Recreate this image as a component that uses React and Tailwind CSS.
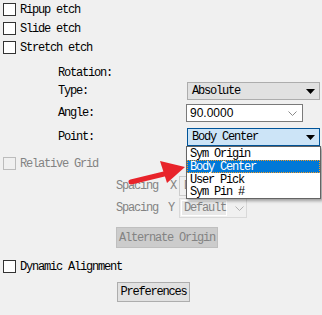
import React from 'react';

const mono = "font-[family-name:'Liberation_Mono',monospace] text-[12px] tracking-[-1.2px] leading-none";

const Check = ({ label, disabled }) => (
  <div className="h-[19px] flex items-center pl-[3px]">
    <div className={`w-[13px] h-[13px] border ${disabled ? 'border-[#bcbcbc] bg-[#f0f0f0]' : 'border-[#333333] bg-white'}`}></div>
    <span className={`ml-[4px] ${disabled ? 'text-[#838383]' : 'text-black'}`}>{label}</span>
  </div>
);

const Caret = () => (
  <svg width="9" height="5" viewBox="0 0 9 5" className="shrink-0">
    <path d="M0 0 L9 0 L4.5 5 Z" fill="#000" />
  </svg>
);

const Chevron = ({ color = '#8a8a8a' }) => (
  <svg width="9" height="5" viewBox="0 0 9 5" className="shrink-0">
    <path d="M0.5 0.5 L4.5 4.5 L8.5 0.5" fill="none" stroke={color} strokeWidth="1" />
  </svg>
);

export default function App() {
  return (
    <div className={`relative w-[322px] h-[315px] bg-[#f0f0f0] overflow-hidden ${mono}`}>
      {/* etch options */}
      <Check label="Ripup etch" />
      <Check label="Slide etch" />
      <Check label="Stretch etch" />

      {/* rotation block */}
      <div className="pl-[58px] pr-[2px] mt-[6px]">
        <div className="h-[19px] flex items-center">Rotation:</div>
        <div className="h-[18px] flex items-center">
          <span className="w-[129px]">Type:</span>
          <div className="flex-1 h-[18px] bg-[#e1e1e1] border border-[#adadad] flex items-center pl-[4px] pr-[4px]">
            <span className="flex-1">Absolute</span>
            <Caret />
          </div>
        </div>
        <div className="h-[18px] mt-[4px] flex items-center">
          <span className="w-[128px]">Angle:</span>
          <div className="w-[117px] h-[18px] bg-white border border-[#7a7a7a] flex items-center pl-[3px] pr-[5px]">
            <span className="flex-1 font-[family-name:'Liberation_Sans',sans-serif] text-[12px] tracking-normal">90.0000</span>
            <Chevron />
          </div>
        </div>
        <div className="h-[18px] mt-[6px] flex items-center">
          <span className="w-[129px]">Point:</span>
          <div className="flex-1 h-[18px] bg-[#cce4f7] border border-[#005499] flex items-center pl-[4px] pr-[4px]">
            <span className="flex-1">Body Center</span>
            <Caret />
          </div>
        </div>
      </div>

      {/* grid block */}
      <div className="mt-[8px]">
        <Check label="Relative Grid" disabled />
        <div className="pl-[116px] text-[#838383]">
          <div className="h-[20px] mt-[3px] flex items-center">
            <span className="w-[54px]">Spacing</span>
            <span className="w-[9px]">X</span>
            <div className="w-[68px] h-[20px] border border-[#cccccc] bg-[#f0f0f0] flex items-center pl-[4px]">D</div>
          </div>
          <div className="h-[20px] mt-[2px] flex items-center">
            <span className="w-[52px]">Spacing</span>
            <span className="w-[11px]">Y</span>
            <div className="w-[68px] h-[20px] border border-[#d9d9d9] bg-[#f0f0f0] flex items-center pl-[1px] pr-[4px]">
              <span className="flex-1 bg-[#e8e8e8] pl-[2px] h-[16px] flex items-center mr-[8px] border border-white">Default</span>
              <Chevron color="#b0b0b0" />
            </div>
          </div>
          <div className="mt-[9px] w-[102px] h-[21px] bg-[#cccccc] border border-[#bfbfbf] flex items-center justify-center">
            Alternate Origin
          </div>
        </div>
      </div>

      <div className="mt-[9px]">
        <Check label="Dynamic Alignment" />
      </div>
      <div className="pl-[117px] mt-[6px]">
        <div className="w-[73px] h-[20px] bg-[#e1e1e1] border border-[#adadad] flex items-center justify-center">
          Preferences
        </div>
      </div>

      {/* open dropdown list */}
      <div className="absolute left-[186px] top-[146px] w-[135px] bg-white border border-[#646464] shadow-[2px_2px_3px_rgba(0,0,0,0.35)]">
        <div className="h-[13px] flex items-center pl-[3px]">Sym Origin</div>
        <div className="h-[13px] flex items-center pl-[2px] bg-[#0078d7] text-white border border-dotted border-[#f59a23]">Body Center</div>
        <div className="h-[13px] flex items-center pl-[3px]">User Pick</div>
        <div className="h-[12px] flex items-center pl-[3px]">Sym Pin #</div>
      </div>

      {/* annotation arrow */}
      <svg className="absolute left-0 top-0 pointer-events-none" width="322" height="315">
        <path d="M131 182 L164 174" stroke="#e8232a" strokeWidth="5" strokeLinecap="round" fill="none" />
        <path d="M185 167 L160 161 L167 183 Z" fill="#e8232a" />
      </svg>
    </div>
  );
}
